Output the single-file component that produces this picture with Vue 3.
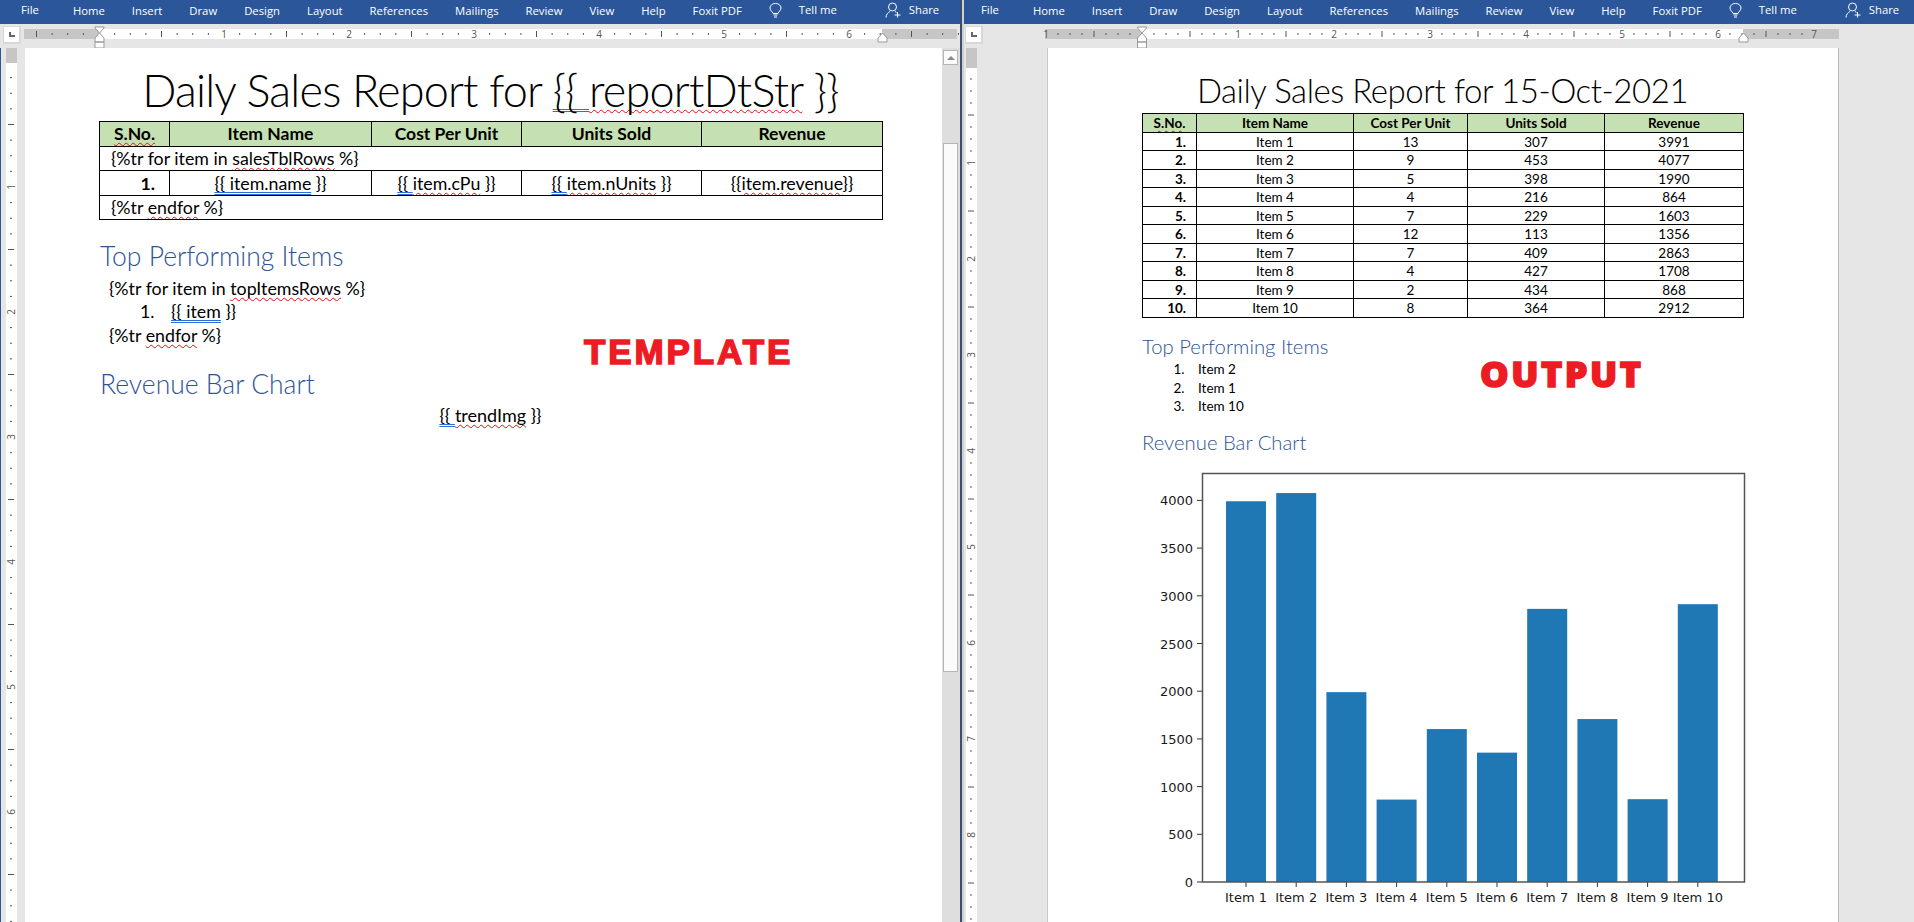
<template>
  <div class="shell">
    <!-- template pane -->
    <section class="pane pane-left">
      <div class="ribbon">
        <span v-for="t in TABS" :key="t" class="tab" :class="{ 'tab-file': t === 'File' }">{{ t }}</span>
        <svg class="bulb" width="13" height="15" viewBox="0 0 13 15" fill="none" stroke="#fff" stroke-width="1">
          <path d="M4 10.5C3.5 8.5 1 7.5 1 5a5.5 4.6 0 0 1 11 0c0 2.500-2.500 3.500-3 5.500z" />
          <path d="M4.500 12h4M5 14h3" />
        </svg>
        <span class="tell">Tell me</span>
        <svg class="person" width="17" height="16" viewBox="0 0 17 16" fill="none" stroke="#fff" stroke-width="1">
          <circle cx="7.500" cy="5" r="4" />
          <path d="M1 15.500c0-3 2-5 4-6M10 9.500l1.500 1M12.500 10v5.500M9.500 13h6" />
        </svg>
        <span class="share">Share</span>
      </div>
      <div class="ruler-row">
        <div class="tab-stop"><span class="tab-stop-l"></span></div>
        <svg class="hruler" width="960" height="24">
          <rect x="24" y="5" width="75" height="10" fill="#c6c6c6" />
          <rect x="99" y="5" width="783" height="10" fill="#fff" />
          <rect x="882" y="5" width="75" height="10" fill="#c6c6c6" />
          <template v-for="m in leftHMarks" :key="m.i">
            <text v-if="m.label" :x="m.x" y="14" class="ruler-num" text-anchor="middle">{{ m.label }}</text>
            <line v-else :x1="m.x" :x2="m.x" :y1="m.long ? 7 : 9" :y2="m.long ? 13 : 11" stroke="#555" />
          </template>
          <path d="M95 3h9v1l-4.500 5-4.500-5zM99.500 9l4.500 5v4h-9v-4zM95 18h9v6h-9z" fill="#fff" stroke="#999" />
          <path d="M878 18v-4l4.500-5 4.500 5v4z" fill="#fff" stroke="#999" />
        </svg>
      </div>
      <div class="pane-body">
        <div class="gutter gutter-left">
          <svg class="vruler" width="11" height="874">
            <rect width="11" height="15" fill="#c6c6c6" />
            <rect y="15" width="11" height="859" fill="#fff" />
            <template v-for="m in leftVMarks" :key="m.i">
              <text v-if="m.label" class="ruler-num" text-anchor="middle" :transform="`translate(9 ${m.y}) rotate(-90)`">{{ m.label }}</text>
              <line v-else :x1="m.long ? 2 : 4" :x2="m.long ? 8 : 6" :y1="m.y" :y2="m.y" stroke="#555" />
            </template>
          </svg>
        </div>
        <main class="page page-left">
          <h1 class="title title-left" v-pre>Daily Sales Report for <span class="gram">{{ </span><span class="spell">reportDtStr</span> }}</h1>
          <table class="grid grid-left">
            <colgroup>
              <col class="l1" /><col class="l2" /><col class="l3" /><col class="l4" /><col class="l5" />
            </colgroup>
            <thead>
              <tr>
                <th><span class="spell">S.No.</span></th>
                <th>Item Name</th>
                <th>Cost Per Unit</th>
                <th>Units Sold</th>
                <th>Revenue</th>
              </tr>
            </thead>
            <tbody v-pre>
              <tr><td colspan="5" class="raw">{%tr for item in <span class="spell">salesTblRows</span> %}</td></tr>
              <tr>
                <td class="num">1.</td>
                <td><span class="gram">{{ item.name</span> }}</td>
                <td><span class="gram">{{ </span><span class="spell">item.cPu</span> }}</td>
                <td><span class="gram">{{ </span><span class="spell">item.nUnits</span> }}</td>
                <td>{{<span class="spell">item.revenue</span>}}</td>
              </tr>
              <tr><td colspan="5" class="raw">{%tr <span class="spell">endfor</span> %}</td></tr>
            </tbody>
          </table>
          <h2 class="head-left first">Top Performing Items</h2>
          <div class="tpl" v-pre>
            <p>{%tr for item in <span class="spell">topItemsRows</span> %}</p>
            <p class="tpl-item"><span class="tpl-n">1.</span><span class="gram">{{ item</span> }}</p>
            <p>{%tr <span class="spell">endfor</span> %}</p>
          </div>
          <h2 class="head-left second">Revenue Bar Chart</h2>
          <p class="trend" v-pre><span class="gram">{{ </span><span class="spell">trendImg</span> }}</p>
          <div class="stamp stamp-template">TEMPLATE</div>
        </main>
        <div class="scroll">
          <div class="scroll-up"><span></span></div>
          <div class="scroll-thumb"></div>
        </div>
      </div>
    </section>

    <div class="split"></div>

    <!-- output pane -->
    <section class="pane pane-right">
      <div class="ribbon">
        <span v-for="t in TABS" :key="t" class="tab" :class="{ 'tab-file': t === 'File' }">{{ t }}</span>
        <svg class="bulb" width="13" height="15" viewBox="0 0 13 15" fill="none" stroke="#fff" stroke-width="1">
          <path d="M4 10.5C3.5 8.5 1 7.5 1 5a5.5 4.6 0 0 1 11 0c0 2.500-2.500 3.500-3 5.500z" />
          <path d="M4.500 12h4M5 14h3" />
        </svg>
        <span class="tell">Tell me</span>
        <svg class="person" width="17" height="16" viewBox="0 0 17 16" fill="none" stroke="#fff" stroke-width="1">
          <circle cx="7.500" cy="5" r="4" />
          <path d="M1 15.500c0-3 2-5 4-6M10 9.500l1.500 1M12.500 10v5.500M9.500 13h6" />
        </svg>
        <span class="share">Share</span>
      </div>
      <div class="ruler-row">
        <div class="tab-stop"><span class="tab-stop-l"></span></div>
        <svg class="hruler" width="952" height="24">
          <rect x="83" y="5" width="97" height="10" fill="#c6c6c6" />
          <rect x="180" y="5" width="601" height="10" fill="#fff" />
          <rect x="781" y="5" width="96" height="10" fill="#c6c6c6" />
          <template v-for="m in rightHMarks" :key="m.i">
            <text v-if="m.label" :x="m.x" y="14" class="ruler-num" text-anchor="middle">{{ m.label }}</text>
            <line v-else :x1="m.x" :x2="m.x" :y1="m.long ? 7 : 9" :y2="m.long ? 13 : 11" stroke="#555" />
          </template>
          <path d="M188.500 3h9v1l-4.500 5-4.500-5zM193 9l4.500 5v4h-9v-4zM188.500 18h9v6h-9z" transform="translate(-13 0)" fill="#fff" stroke="#999" />
          <path d="M777 18v-4l4.500-5 4.500 5v4z" fill="#fff" stroke="#999" />
        </svg>
      </div>
      <div class="pane-body">
        <div class="gutter gutter-right">
          <svg class="vruler" width="11" height="874">
            <rect width="11" height="20" fill="#c6c6c6" />
            <rect y="20" width="11" height="854" fill="#fff" />
            <template v-for="m in rightVMarks" :key="m.i">
              <text v-if="m.label" class="ruler-num" text-anchor="middle" :transform="`translate(9 ${m.y}) rotate(-90)`">{{ m.label }}</text>
              <line v-else :x1="m.long ? 2 : 4" :x2="m.long ? 8 : 6" :y1="m.y" :y2="m.y" stroke="#555" />
            </template>
          </svg>
        </div>
        <main class="page page-right">
          <h1 class="title title-right">Daily Sales Report for 15-Oct-2021</h1>
          <table class="grid grid-right">
            <colgroup>
              <col class="r1" /><col class="r2" /><col class="r3" /><col class="r4" /><col class="r5" />
            </colgroup>
            <thead>
              <tr>
                <th><span class="spell">S.No.</span></th>
                <th>Item Name</th>
                <th>Cost Per Unit</th>
                <th>Units Sold</th>
                <th>Revenue</th>
              </tr>
            </thead>
            <tbody>
              <tr v-for="(r, i) in ROWS" :key="r[0]">
                <td class="num">{{ i + 1 }}.</td>
                <td>{{ r[0] }}</td>
                <td>{{ r[1] }}</td>
                <td>{{ r[2] }}</td>
                <td>{{ r[3] }}</td>
              </tr>
            </tbody>
          </table>
          <h2 class="head-right first">Top Performing Items</h2>
          <ol class="top-list">
            <li v-for="t in TOP" :key="t">{{ t }}</li>
          </ol>
          <h2 class="head-right second">Revenue Bar Chart</h2>
          <svg class="chart" width="620" height="452">
            <g v-for="b in bars" :key="b.label">
              <rect :x="b.x" :y="b.y" width="40" :height="b.h" fill="#1f77b4" />
              <line :x1="b.x + 20" :x2="b.x + 20" y1="413" y2="418" stroke="#333" />
              <text :x="b.x + 20" y="433" class="tick" text-anchor="middle">{{ b.label }}</text>
            </g>
            <g v-for="t in yTicks" :key="t.v">
              <line x1="54" x2="59" :y1="t.y" :y2="t.y" stroke="#333" />
              <text x="50" :y="t.y + 5" class="tick" text-anchor="end">{{ t.v }}</text>
            </g>
            <rect x="59.500" y="4.500" width="542" height="408.500" fill="none" stroke="#555" stroke-width="1.500" />
          </svg>
          <div class="stamp stamp-output">OUTPUT</div>
        </main>
      </div>
    </section>
  </div>
</template>

<script setup>
const TABS = ['File', 'Home', 'Insert', 'Draw', 'Design', 'Layout', 'References', 'Mailings', 'Review', 'View', 'Help', 'Foxit PDF'];

const ROWS = [
  ['Item 1', 13, 307, 3991],
  ['Item 2', 9, 453, 4077],
  ['Item 3', 5, 398, 1990],
  ['Item 4', 4, 216, 864],
  ['Item 5', 7, 229, 1603],
  ['Item 6', 12, 113, 1356],
  ['Item 7', 7, 409, 2863],
  ['Item 8', 4, 427, 1708],
  ['Item 9', 2, 434, 868],
  ['Item 10', 8, 364, 2912],
];
const TOP = ['Item 2', 'Item 1', 'Item 10'];

// ruler marks: one every 1/8 inch, numbers on the inch, longer tick on the half
const marks = (origin, ppi, from, to) => {
  const out = [];
  for (let i = from; i <= to; i++) {
    if (i === 0) continue;
    const pos = origin + (i * ppi) / 8;
    out.push({
      i,
      x: pos,
      y: pos,
      label: i % 8 === 0 ? String(Math.abs(i / 8)) : '',
      long: i % 4 === 0,
    });
  }
  return out;
};

const leftHMarks = marks(99, 125, -4, 55);
const rightHMarks = marks(180, 96, -8, 56);
const leftVMarks = marks(14, 125, 0, 55);
const rightVMarks = marks(19, 96, 0, 71);

const BASE = 413;
const PER_UNIT = 0.0954;
const bars = ROWS.map((r, i) => ({
  label: r[0],
  x: 83 + i * 50.2,
  y: BASE - r[3] * PER_UNIT,
  h: r[3] * PER_UNIT,
}));
const yTicks = [0, 500, 1000, 1500, 2000, 2500, 3000, 3500, 4000].map((v) => ({ v, y: BASE - v * PER_UNIT }));
</script>

<style>
html, body { overflow: hidden; }
</style>

<style scoped>
.shell {
  display: flex;
  width: 1914px;
  height: 922px;
  overflow: hidden;
  background: #e6e6e6;
  font-family: Lato, "Open Sans", sans-serif;
  color: #000;
}
.pane { display: flex; flex-direction: column; height: 922px; }
.pane-left { width: 960px; }
.pane-right { width: 952px; }
.split {
  width: 2px;
  background: #3b4f70;
  box-shadow: 2px 0 0 #d0d0d0;
  position: relative;
}

.ribbon {
  display: flex;
  align-items: center;
  height: 24px;
  flex: none;
  padding-left: 21px;
  gap: 27px;
  background: #2b579a;
  color: #fff;
  font-family: "Open Sans", sans-serif;
  font-size: 11.300px;
  white-space: nowrap;
}
.pane-right .ribbon { padding-left: 19px; }
.tab { margin-top: -4px; }
.tab-file { margin-right: 7px; margin-top: -6px; }
.bulb { margin-top: -4px; }
.tell { margin-left: -10px; margin-top: -6px; }
.person { margin-left: 21px; margin-top: -5px; }
.share { margin-left: -20px; margin-top: -6px; }

.ruler-row { display: flex; height: 24px; flex: none; position: relative; }
.hruler { display: block; flex: none; }
.tab-stop {
  position: absolute;
  left: 3px;
  top: 2px;
  width: 18px;
  height: 18px;
  padding: 1px;
  box-sizing: border-box;
  background: #d8d8d8;
}
.tab-stop-l {
  display: block;
  width: 15px;
  height: 15px;
  background: #fff;
  position: relative;
}
.tab-stop-l::after {
  content: "";
  position: absolute;
  left: 5px;
  top: 5px;
  width: 6px;
  height: 5px;
  border-left: 2px solid #666;
  border-bottom: 2px solid #666;
  box-sizing: border-box;
}
.ruler-num { font-family: "Open Sans", sans-serif; font-size: 10px; fill: #555; }

.pane-body { display: flex; flex: 1; min-height: 0; }
.gutter { flex: none; }
.gutter-left { width: 25px; padding-left: 6px; box-sizing: border-box; border-left: 1px solid #2b579a; }
.gutter-left .vruler { margin-left: -1px; }
.gutter-right { width: 85px; padding-left: 4px; box-sizing: border-box; }
.vruler { display: block; overflow: visible; }

.page {
  position: relative;
  flex: none;
  background: #fff;
  box-sizing: border-box;
  height: 874px;
}
.page-left { width: 917px; padding-left: 74px; }
.page-right {
  width: 792px;
  padding-left: 94px;
  border-left: 1px solid #c8c8c8;
  border-right: 1px solid #bdbdbd;
}

.title { margin: 0; font-weight: 300; text-align: center; white-space: nowrap; }
.title-left { width: 783px; height: 73px; font-size: 45px; line-height: 85px; letter-spacing: -0.800px; }
.title-right { width: 601px; height: 65px; font-size: 33px; line-height: 85px; letter-spacing: -0.450px; }

.spell { text-decoration: underline wavy #e01010 1px; text-decoration-skip-ink: none; text-underline-offset: 2px; }
.gram { text-decoration: underline double #2f6ed8 1px; text-decoration-skip-ink: none; text-underline-offset: 2px; }

.grid { border-collapse: collapse; table-layout: fixed; text-align: center; }
.grid th, .grid td { border: 1px solid #000; padding: 0; white-space: nowrap; overflow: hidden; }
.grid th { background: #c5e0b3; font-weight: 700; }
.grid .num { font-weight: 700; text-align: right; }

.grid-left { width: 783px; font-size: 17.500px; }
.grid-left td { font-size: 17.800px; }
.grid-left tr { height: 24.500px; }
.grid-left .raw { text-align: left; padding-left: 11px; }
.grid-left .num { padding-right: 14px; }
.l1 { width: 70px; } .l2 { width: 202px; } .l3 { width: 150px; } .l4 { width: 180px; } .l5 { width: 181px; }

.grid-right { width: 601px; font-size: 13.500px; }
.grid-right td { padding-top: 1px; }
.grid-right tr { height: 18.500px; }
.grid-right .num { padding-right: 10px; }
.r1 { width: 54px; } .r2 { width: 157px; } .r3 { width: 114px; } .r4 { width: 137px; } .r5 { width: 139px; }

h2 { margin: 0; font-weight: 300; color: #2f5496; white-space: nowrap; }
.head-left { font-size: 26.500px; line-height: 30px; padding-left: 1px; }
.head-left.first { margin-top: 20.500px; }
.head-left.second { margin-top: 22px; }
.head-right { font-size: 20.300px; line-height: 24px; }
.head-right.first { margin-top: 16.500px; }
.head-right.second { margin-top: 14.500px; }

.tpl { margin: 6px 0 0 10px; font-size: 17.800px; line-height: 23.500px; }
.tpl p { margin: 0; }
.tpl-item { padding-left: 31px; }
.tpl-n { display: inline-block; width: 31px; }
.trend { margin: 3.500px 0 0; width: 783px; text-align: center; font-size: 18px; line-height: 24px; }

.top-list { margin: 2px 0 0; padding: 0 0 0 46px; font-size: 13.500px; line-height: 18.500px; }
.top-list li { padding-left: 10px; }

.chart { display: block; margin: 15px 0 0 1px; }
.tick { font-family: "DejaVu Sans", sans-serif; font-size: 13px; fill: #1a1a1a; }

.stamp { position: absolute; color: #ed1c24; white-space: nowrap; }
.stamp-template {
  left: 559px;
  top: 283.500px;
  font-family: "Liberation Sans", sans-serif;
  font-weight: 700;
  font-size: 35px;
  line-height: 40px;
  letter-spacing: 2.900px;
  -webkit-text-stroke: 1.500px #ed1c24;
}
.stamp-output {
  left: 432px;
  top: 303.500px;
  font-family: "Open Sans", sans-serif;
  font-weight: 800;
  font-size: 36px;
  line-height: 44px;
  letter-spacing: 2.500px;
  -webkit-text-stroke: 1.500px #ed1c24;
}

.scroll { position: relative; flex: 1; background: #dedede; }
.scroll-up, .scroll-thumb {
  position: absolute;
  left: 1px;
  width: 15px;
  box-sizing: border-box;
  background: #fbfbfb;
  border: 1px solid #b5b5b5;
}
.scroll-up { top: 2px; height: 15px; display: flex; align-items: center; justify-content: center; }
.scroll-up span {
  width: 0;
  height: 0;
  border-left: 4px solid transparent;
  border-right: 4px solid transparent;
  border-bottom: 4px solid #888;
}
.scroll-thumb { top: 95px; height: 529px; }
</style>
